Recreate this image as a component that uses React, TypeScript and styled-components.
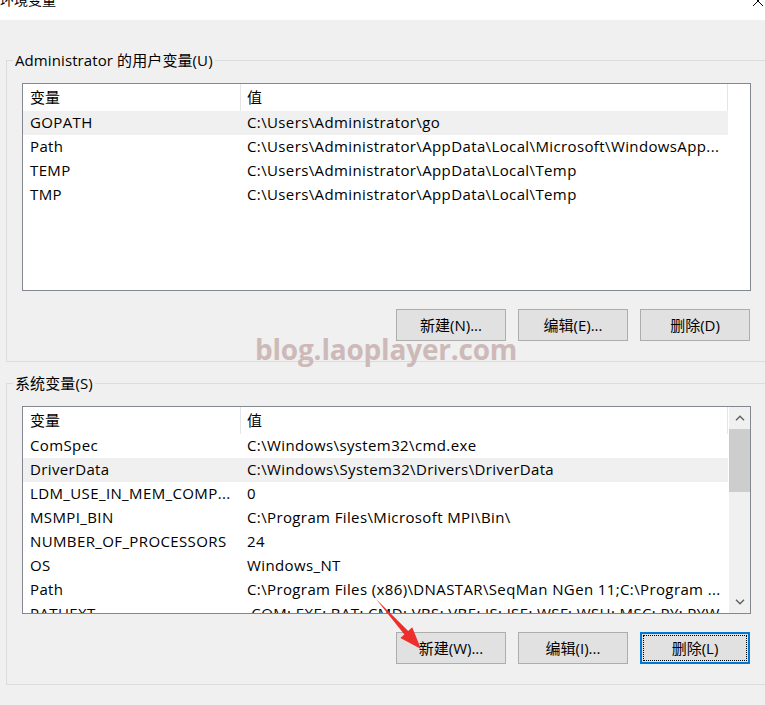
import React from 'react';
import styled, { createGlobalStyle, css } from 'styled-components';

const Global = createGlobalStyle`
  html, body { margin: 0; padding: 0; }
  body {
    width: 765px;
    height: 705px;
    overflow: hidden;
    background: #f0f0f0;
    font-family: "Open Sans", "Noto Sans CJK SC", sans-serif;
    font-size: 15px;
    color: #000;
  }
  * { box-sizing: border-box; }
`;

const Window = styled.div`
  position: relative;
  width: 765px;
  height: 705px;
  overflow: hidden;
  background: #f0f0f0;
  display: flex;
  flex-direction: column;
`;

const TitleBar = styled.div`
  height: 20px;
  flex-shrink: 0;
  background: #fff;
  display: flex;
  align-items: flex-start;
  justify-content: space-between;
  overflow: hidden;
`;

const TitleText = styled.div`
  margin-top: -10px;
  line-height: 20px;
  font-size: 14px;
`;

const CloseIcon = styled.svg`
  margin-top: -6px;
  flex-shrink: 0;
`;

const Content = styled.div`
  padding: 31px 0 0 6px;
  display: flex;
  flex-direction: column;
  gap: 12px;
`;

const Group = styled.fieldset`
  margin: 0;
  width: 790px;
  border: 1px solid #dcdcdc;
  padding: 14px 0 20px 15px;
  min-width: 0;
`;

const Legend = styled.legend`
  margin-left: -9px;
  padding: 0 2px;
  line-height: 18px;
  font-size: 15px;
  letter-spacing: 0.1px;
`;

const Inner = styled.div`
  width: 729px;
  display: flex;
  flex-direction: column;
  gap: 18px;
`;

const List = styled.div`
  width: 729px;
  height: 208px;
  border: 1px solid #828790;
  background: #fff;
  overflow: hidden;
  display: flex;
`;

const ListBody = styled.div`
  flex: 1;
  min-width: 0;
  display: flex;
  flex-direction: column;
`;

const Row = styled.div<{ $header?: boolean; $selected?: boolean }>`
  display: grid;
  grid-template-columns: 218px 487px;
  width: 705px;
  flex-shrink: 0;
  height: ${(p) => (p.$header ? 27 : 24)}px;
  align-items: center;
  background: ${(p) => (p.$selected ? '#f0f0f0' : 'transparent')};
`;

const Cell = styled.div<{ $header?: boolean }>`
  padding-left: 7px;
  white-space: nowrap;
  overflow: hidden;
  line-height: 22px;
  letter-spacing: 0.38px;
  padding-bottom: 2px;
  ${(p) =>
    p.$header &&
    css`
      height: 100%;
      display: flex;
      align-items: center;
      border-right: 1px solid #e5e5e5;
      letter-spacing: 0;
      padding-bottom: 2px;
    `}
`;

const ValueCell = styled(Cell)`
  padding-left: 6px;
`;

const Scrollbar = styled.div`
  width: 21px;
  flex-shrink: 0;
  background: #f0f0f0;
  display: flex;
  flex-direction: column;
`;

const ScrollArrow = styled.div`
  height: 22px;
  display: flex;
  align-items: center;
  justify-content: center;
`;

const Thumb = styled.div`
  height: 63px;
  background: #cdcdcd;
`;

const Track = styled.div`
  flex: 1;
`;

const Buttons = styled.div`
  display: flex;
  justify-content: flex-end;
  gap: 12px;
  padding-right: 1px;
`;

const Button = styled.button<{ $focused?: boolean }>`
  position: relative;
  width: 110px;
  height: 32px;
  background: #e1e1e1;
  border: 1px solid #adadad;
  font-family: "Open Sans", "Noto Sans CJK SC", sans-serif;
  font-size: 15px;
  color: #000;
  padding: 0 0 1px;
  display: flex;
  align-items: center;
  justify-content: center;
  ${(p) =>
    p.$focused &&
    css`
      border: 2px solid #0078d7;
      outline: 1px dotted #000;
      outline-offset: -4px;
    `}
`;

const Watermark = styled.div`
  position: absolute;
  left: 255px;
  top: 330px;
  font-family: "Open Sans", sans-serif;
  font-weight: 700;
  font-size: 28px;
  letter-spacing: -0.2px;
  color: #cdbab8;
  pointer-events: none;
`;

const Overlay = styled.svg`
  position: absolute;
  left: 0;
  top: 0;
  pointer-events: none;
`;

type Item = { name: string; value: string; selected?: boolean };

const userVars: Item[] = [
  { name: 'GOPATH', value: 'C:\\Users\\Administrator\\go', selected: true },
  { name: 'Path', value: 'C:\\Users\\Administrator\\AppData\\Local\\Microsoft\\WindowsApp...' },
  { name: 'TEMP', value: 'C:\\Users\\Administrator\\AppData\\Local\\Temp' },
  { name: 'TMP', value: 'C:\\Users\\Administrator\\AppData\\Local\\Temp' },
];

const sysVars: Item[] = [
  { name: 'ComSpec', value: 'C:\\Windows\\system32\\cmd.exe' },
  { name: 'DriverData', value: 'C:\\Windows\\System32\\Drivers\\DriverData', selected: true },
  { name: 'LDM_USE_IN_MEM_COMP...', value: '0' },
  { name: 'MSMPI_BIN', value: 'C:\\Program Files\\Microsoft MPI\\Bin\\' },
  { name: 'NUMBER_OF_PROCESSORS', value: '24' },
  { name: 'OS', value: 'Windows_NT' },
  { name: 'Path', value: 'C:\\Program Files (x86)\\DNASTAR\\SeqMan NGen 11;C:\\Program ...' },
  { name: 'PATHEXT', value: '.COM;.EXE;.BAT;.CMD;.VBS;.VBE;.JS;.JSE;.WSF;.WSH;.MSC;.PY;.PYW' },
];

const Chevron = ({ up }: { up?: boolean }) => (
  <svg width="10" height="6" viewBox="0 0 10 6">
    <path
      d={up ? 'M1 5.2 L5 1.2 L9 5.2' : 'M1 0.8 L5 4.8 L9 0.8'}
      fill="none"
      stroke="#606060"
      strokeWidth="1.4"
    />
  </svg>
);

const VarList = ({ items, scroll }: { items: Item[]; scroll?: boolean }) => (
  <List>
    <ListBody>
      <Row $header>
        <Cell $header>变量</Cell>
        <ValueCell $header>值</ValueCell>
      </Row>
      {items.map((it) => (
        <Row key={it.name} $selected={it.selected}>
          <Cell>{it.name}</Cell>
          <ValueCell>{it.value}</ValueCell>
        </Row>
      ))}
    </ListBody>
    {scroll && (
      <Scrollbar>
        <ScrollArrow>
          <Chevron up />
        </ScrollArrow>
        <Thumb />
        <Track />
        <ScrollArrow>
          <Chevron />
        </ScrollArrow>
      </Scrollbar>
    )}
  </List>
);

export default function App() {
  return (
    <>
      <Global />
      <Window>
        <TitleBar>
          <TitleText>环境变量</TitleText>
          <CloseIcon width="14" height="14" viewBox="0 0 14 14">
            <path d="M2 2 L12 12 M12 2 L2 12" stroke="#000" strokeWidth="1" />
          </CloseIcon>
        </TitleBar>
        <Content>
          <Group>
            <Legend>Administrator 的用户变量(U)</Legend>
            <Inner>
              <VarList items={userVars} />
              <Buttons>
                <Button>新建(N)...</Button>
                <Button>编辑(E)...</Button>
                <Button>删除(D)</Button>
              </Buttons>
            </Inner>
          </Group>
          <Group>
            <Legend>系统变量(S)</Legend>
            <Inner>
              <VarList items={sysVars} scroll />
              <Buttons>
                <Button>新建(W)...</Button>
                <Button>编辑(I)...</Button>
                <Button $focused>删除(L)</Button>
              </Buttons>
            </Inner>
          </Group>
        </Content>
        <Watermark>blog.laoplayer.com</Watermark>
        <Overlay width="765" height="705" viewBox="0 0 765 705">
          <polygon
            points="376,599 404.4,634.4 400.4,638.1 421,649 412.2,627.3 408.2,631 "
            fill="#ee2e2a"
          />
        </Overlay>
      </Window>
    </>
  );
}
